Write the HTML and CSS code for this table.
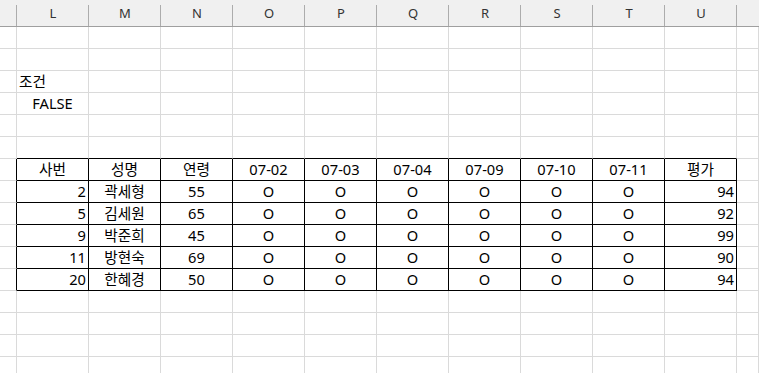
FILE: index.html
```html
<!DOCTYPE html>
<html lang="ko">
<head>
<meta charset="utf-8">
<title>Sheet</title>
<link rel="stylesheet" href="styles.css">
</head>
<body>
<div class="sheet">
  <div class="hrow">
    <div class="h"></div><div class="h">L</div><div class="h">M</div><div class="h">N</div><div class="h">O</div><div class="h">P</div><div class="h">Q</div><div class="h">R</div><div class="h">S</div><div class="h">T</div><div class="h">U</div><div class="h last"></div>
  </div>
  <div class="row"><div class="c"></div><div class="c"></div><div class="c"></div><div class="c"></div><div class="c"></div><div class="c"></div><div class="c"></div><div class="c"></div><div class="c"></div><div class="c"></div><div class="c"></div><div class="c"></div></div>
  <div class="row"><div class="c"></div><div class="c"></div><div class="c"></div><div class="c"></div><div class="c"></div><div class="c"></div><div class="c"></div><div class="c"></div><div class="c"></div><div class="c"></div><div class="c"></div><div class="c"></div></div>
  <div class="row"><div class="c"></div><div class="c l over">조건</div><div class="c"></div><div class="c"></div><div class="c"></div><div class="c"></div><div class="c"></div><div class="c"></div><div class="c"></div><div class="c"></div><div class="c"></div><div class="c"></div></div>
  <div class="row"><div class="c"></div><div class="c m">FALSE</div><div class="c"></div><div class="c"></div><div class="c"></div><div class="c"></div><div class="c"></div><div class="c"></div><div class="c"></div><div class="c"></div><div class="c"></div><div class="c"></div></div>
  <div class="row"><div class="c"></div><div class="c"></div><div class="c"></div><div class="c"></div><div class="c"></div><div class="c"></div><div class="c"></div><div class="c"></div><div class="c"></div><div class="c"></div><div class="c"></div><div class="c"></div></div>
  <div class="row"><div class="c"></div><div class="c tt"></div><div class="c tt"></div><div class="c tt"></div><div class="c tt"></div><div class="c tt"></div><div class="c tt"></div><div class="c tt"></div><div class="c tt"></div><div class="c tt"></div><div class="c tt"></div><div class="c"></div></div>
  <div class="row"><div class="c tk"></div><div class="c t m">사번</div><div class="c t m">성명</div><div class="c t m">연령</div><div class="c t m">07-02</div><div class="c t m">07-03</div><div class="c t m">07-04</div><div class="c t m">07-09</div><div class="c t m">07-10</div><div class="c t m">07-11</div><div class="c t m">평가</div><div class="c"></div></div>
  <div class="row"><div class="c tk"></div><div class="c t r">2</div><div class="c t m">곽세형</div><div class="c t m">55</div><div class="c t m">O</div><div class="c t m">O</div><div class="c t m">O</div><div class="c t m">O</div><div class="c t m">O</div><div class="c t m">O</div><div class="c t r">94</div><div class="c"></div></div>
  <div class="row"><div class="c tk"></div><div class="c t r">5</div><div class="c t m">김세원</div><div class="c t m">65</div><div class="c t m">O</div><div class="c t m">O</div><div class="c t m">O</div><div class="c t m">O</div><div class="c t m">O</div><div class="c t m">O</div><div class="c t r">92</div><div class="c"></div></div>
  <div class="row"><div class="c tk"></div><div class="c t r">9</div><div class="c t m">박준희</div><div class="c t m">45</div><div class="c t m">O</div><div class="c t m">O</div><div class="c t m">O</div><div class="c t m">O</div><div class="c t m">O</div><div class="c t m">O</div><div class="c t r">99</div><div class="c"></div></div>
  <div class="row"><div class="c tk"></div><div class="c t r">11</div><div class="c t m">방현숙</div><div class="c t m">69</div><div class="c t m">O</div><div class="c t m">O</div><div class="c t m">O</div><div class="c t m">O</div><div class="c t m">O</div><div class="c t m">O</div><div class="c t r">90</div><div class="c"></div></div>
  <div class="row"><div class="c tk"></div><div class="c t r">20</div><div class="c t m">한혜경</div><div class="c t m">50</div><div class="c t m">O</div><div class="c t m">O</div><div class="c t m">O</div><div class="c t m">O</div><div class="c t m">O</div><div class="c t m">O</div><div class="c t r">94</div><div class="c"></div></div>
  <div class="row"><div class="c"></div><div class="c"></div><div class="c"></div><div class="c"></div><div class="c"></div><div class="c"></div><div class="c"></div><div class="c"></div><div class="c"></div><div class="c"></div><div class="c"></div><div class="c"></div></div>
  <div class="row"><div class="c"></div><div class="c"></div><div class="c"></div><div class="c"></div><div class="c"></div><div class="c"></div><div class="c"></div><div class="c"></div><div class="c"></div><div class="c"></div><div class="c"></div><div class="c"></div></div>
  <div class="row"><div class="c"></div><div class="c"></div><div class="c"></div><div class="c"></div><div class="c"></div><div class="c"></div><div class="c"></div><div class="c"></div><div class="c"></div><div class="c"></div><div class="c"></div><div class="c"></div></div>
  <div class="row"><div class="c"></div><div class="c"></div><div class="c"></div><div class="c"></div><div class="c"></div><div class="c"></div><div class="c"></div><div class="c"></div><div class="c"></div><div class="c"></div><div class="c"></div><div class="c"></div></div>
</div>
</body>
</html>
```

FILE: styles.css
```css
html, body {
  margin: 0;
  padding: 0;
  background: #ffffff;
  overflow: hidden;
}

.sheet {
  width: 759px;
  height: 373px;
  overflow: hidden;
  font-family: "Noto Sans", "Noto Sans CJK KR", sans-serif;
  font-size: 14.667px;
  color: #000000;
}

.hrow,
.row {
  display: grid;
  grid-template-columns: 17px repeat(10, 72px) 1fr;
}

.hrow {
  height: 27px;
  background: #f0f0f0;
  border-bottom: 1px solid #9f9f9f;
  box-sizing: border-box;
}

.h {
  font-size: 13px;
  line-height: 26px;
  text-align: center;
  color: #333333;
  background-image: linear-gradient(#acacac, #acacac);
  background-size: 1px 21px;
  background-position: right bottom;
  background-repeat: no-repeat;
}

.h.last {
  background-image: none;
}

.row {
  height: 22px;
}

.c {
  box-sizing: border-box;
  border-right: 1px solid #dadada;
  border-bottom: 1px solid #dadada;
  line-height: 21px;
  white-space: nowrap;
  overflow: hidden;
}

.c.over {
  overflow: visible;
}

.l {
  text-align: left;
  padding-left: 2px;
}

.m {
  text-align: center;
}

.r {
  text-align: right;
  padding-right: 2px;
}

.t {
  border-right-color: #000000;
  border-bottom-color: #000000;
}

.tk {
  border-right-color: #000000;
}

.tt {
  border-bottom-color: #000000;
}
```
